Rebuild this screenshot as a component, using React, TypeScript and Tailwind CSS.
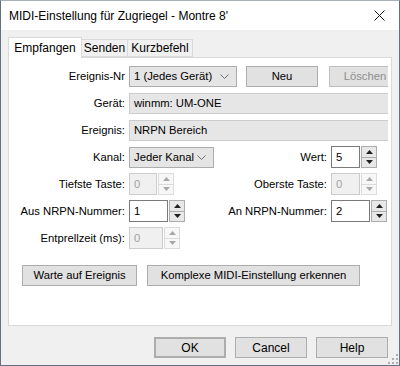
import { ReactNode } from "react"

const font = "font-['Segoe_UI','Liberation_Sans',Arial,sans-serif]"

function Arrow({ up, disabled }: { up?: boolean; disabled?: boolean }) {
  return (
    <svg width="7" height="4" viewBox="0 0 7 4" className="block">
      <polygon
        points={up ? "3.5,0 7,4 0,4" : "0,0 7,0 3.5,4"}
        fill={disabled ? "#a8a8a8" : "#202020"}
      />
    </svg>
  )
}

function Spin({ value, box, disabled }: { value: string; box: string; disabled?: boolean }) {
  return (
    <div className="flex h-[22px] items-stretch shrink-0">
      <div
        className={`${box} flex items-center pl-[4px] border ${
          disabled ? "border-[#cccccc] bg-[#f0f0f0] text-[#a0a0a0]" : "border-[#7a7a7a] bg-white text-black"
        }`}
      >
        {value}
      </div>
      <div
        className={`ml-[1px] w-[16px] flex flex-col border ${
          disabled ? "border-[#dcdcdc] bg-[#f7f7f7]" : "border-[#adadad] bg-[#e8e8e8]"
        }`}
      >
        <div className={`flex-1 flex items-center justify-center border-b ${disabled ? "border-[#dcdcdc]" : "border-[#adadad]"}`}>
          <Arrow up disabled={disabled} />
        </div>
        <div className="flex-1 flex items-center justify-center">
          <Arrow disabled={disabled} />
        </div>
      </div>
    </div>
  )
}

function Combo({ text, width }: { text: string; width: string }) {
  return (
    <div className={`${width} shrink-0 h-[21px] flex items-center justify-between pl-[4px] pr-[7px] bg-[#e5e5e5] border border-[#adadad] whitespace-nowrap`}>
      <span>{text}</span>
      <svg width="9" height="5" viewBox="0 0 9 5">
        <polyline points="0.5,0.5 4.5,4.5 8.5,0.5" fill="none" stroke="#707070" strokeWidth="1" />
      </svg>
    </div>
  )
}

function Btn({ children, className = "" }: { children: ReactNode; className?: string }) {
  return (
    <div className={`h-[21px] shrink-0 whitespace-nowrap flex items-center justify-center bg-[#e1e1e1] border border-[#adadad] ${className}`}>
      {children}
    </div>
  )
}

function Label({ children, w = "w-[120px]" }: { children: ReactNode; w?: string }) {
  return <div className={`${w} shrink-0 whitespace-nowrap text-right pr-[4px]`}>{children}</div>
}

export default function App() {
  return (
    <div className={`${font} text-[11.25px] text-black w-[400px] h-[366px] flex flex-col border border-[#62707f] border-t-[#a9b2bc] overflow-hidden`}>
      {/* title bar */}
      <div className="h-[29px] bg-white flex items-center justify-between pl-[8px] pr-[14px]">
        <span className="text-[12px]">MIDI-Einstellung für Zugriegel - Montre 8'</span>
        <svg width="11" height="11" viewBox="0 0 11 11">
          <path d="M0.5 0.5 L10.5 10.5 M10.5 0.5 L0.5 10.5" stroke="#1a1a1a" strokeWidth="1" />
        </svg>
      </div>

      <div className="flex-1 bg-[#f0f0f0] px-[7px] relative">
        {/* tabs */}
        <div className="relative z-10 flex items-start h-[20px] mt-[7px] text-[12px]">
          <div className="h-[21px] w-[74px] bg-white border border-b-0 border-[#d9d9d9] flex items-center justify-center pb-[1px]">
            Empfangen
          </div>
          <div className="mt-[2px] h-[18px] w-[46px] border border-l-0 border-[#d9d9d9] flex items-center justify-center">
            Senden
          </div>
          <div className="mt-[2px] h-[18px] w-[65px] border border-l-0 border-[#d9d9d9] flex items-center justify-center">
            Kurzbefehl
          </div>
        </div>

        {/* panel */}
        <div className="w-[384px] h-[269px] bg-white border border-[#d9d9d9]">
          <div className="w-[379px] overflow-hidden pt-[8px] flex flex-col">
            <div className="flex items-center h-[21px]">
              <Label>Ereignis-Nr</Label>
              <Combo text="1 (Jedes Gerät)" width="w-[108px]" />
              <Btn className="ml-[9px] w-[72px]">Neu</Btn>
              <Btn className="ml-[11px] w-[72px] bg-[#cccccc] border-[#bfbfbf] text-[#8d8d8d]">Löschen</Btn>
            </div>

            <div className="flex items-center h-[21px] mt-[6px]">
              <Label>Gerät:</Label>
              <div className="w-[262px] shrink-0 h-[21px] flex items-center pl-[4px] bg-[#e6e6e6] border border-[#cccccc]">
                winmm: UM-ONE
              </div>
            </div>

            <div className="flex items-center h-[21px] mt-[6px]">
              <Label>Ereignis:</Label>
              <div className="w-[262px] shrink-0 h-[21px] flex items-center pl-[4px] bg-[#e6e6e6] border border-[#cccccc]">
                NRPN Bereich
              </div>
            </div>

            <div className="flex items-center h-[22px] mt-[5px]">
              <Label>Kanal:</Label>
              <Combo text="Jeder Kanal" width="w-[85px]" />
              <Label w="w-[117px]">Wert:</Label>
              <Spin value="5" box="w-[29px]" />
            </div>

            <div className="flex items-center h-[22px] mt-[5px]">
              <Label>Tiefste Taste:</Label>
              <Spin value="0" box="w-[28px]" disabled />
              <div className="w-[40px] shrink-0" />
              <Label w="w-[117px]">Oberste Taste:</Label>
              <Spin value="0" box="w-[29px]" disabled />
            </div>

            <div className="flex items-center h-[22px] mt-[5px]">
              <Label>Aus NRPN-Nummer:</Label>
              <Spin value="1" box="w-[39px]" />
              <div className="w-[29px] shrink-0" />
              <Label w="w-[117px]">An NRPN-Nummer:</Label>
              <Spin value="2" box="w-[39px]" />
            </div>

            <div className="flex items-center h-[22px] mt-[5px]">
              <Label>Entprellzeit (ms):</Label>
              <Spin value="0" box="w-[34px]" disabled />
            </div>

            <div className="flex items-center mt-[16px] pl-[13px]">
              <Btn className="w-[115px]">Warte auf Ereignis</Btn>
              <Btn className="ml-[10px] w-[213px]">Komplexe MIDI-Einstellung erkennen</Btn>
            </div>
          </div>
        </div>

        {/* dialog buttons */}
        <div className="flex justify-end gap-[9px] mt-[11px] pr-[4px] text-[12px]">
          <Btn className="w-[72px] border-2 border-[#0078d7]">OK</Btn>
          <Btn className="w-[72px]">Cancel</Btn>
          <Btn className="w-[72px]">Help</Btn>
        </div>

        {/* size grip */}
        <svg width="10" height="10" viewBox="0 0 10 10" className="absolute right-[1px] bottom-[1px]">
          <g fill="#b0b0b0">
            <rect x="8" y="0" width="2" height="2" />
            <rect x="4" y="4" width="2" height="2" />
            <rect x="8" y="4" width="2" height="2" />
            <rect x="0" y="8" width="2" height="2" />
            <rect x="4" y="8" width="2" height="2" />
            <rect x="8" y="8" width="2" height="2" />
          </g>
        </svg>
      </div>
    </div>
  )
}
